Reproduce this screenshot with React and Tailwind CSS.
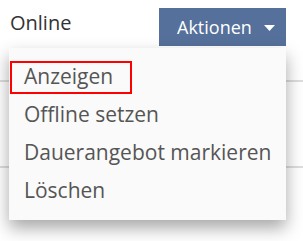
export default function App() {
  const items = ["Anzeigen", "Offline setzen", "Dauerangebot markieren", "Löschen"];

  return (
    <div
      className="relative w-[303px] h-[241px] bg-white overflow-hidden text-[#333]"
      style={{ fontFamily: '"Open Sans", sans-serif' }}
    >
      {/* Header row */}
      <div className="flex items-start justify-between pl-[10px] pr-[17px] pt-[8px] h-[48px]">
        <span className="text-[20px] leading-[24px] mt-[3px]">Online</span>
        <button className="flex items-center gap-[12px] h-[38px] w-[127px] pl-[18px] bg-[#55709a] text-white text-[18px]">
          Aktionen
          <svg width="11" height="6" viewBox="0 0 11 6" className="mt-[2px]">
            <polygon points="0,0 11,0 5.5,6" fill="#fff" />
          </svg>
        </button>
      </div>

      {/* Table rows behind */}
      <div className="h-[34px] border-b-2 border-[#dddddd]" />
      <div className="h-[86px] border-b-2 border-[#dddddd]" />

      {/* Dropdown menu */}
      <div className="absolute left-[9px] top-[48px] w-[277px] h-[172px] bg-[#fafafa] py-[10px] shadow-[0_8px_16px_rgba(0,0,0,0.35)]">
        {items.map((label, i) => (
          <div key={i} className="h-[38px] flex items-center text-[21px] text-[#555]">
            {i === 0 ? (
              <span className="ml-[1px] pl-[12px] pr-[17px] h-[33px] flex items-center border-2 border-[#ff0000]">
                {label}
              </span>
            ) : (
              <span className="pl-[15px]">{label}</span>
            )}
          </div>
        ))}
      </div>
    </div>
  );
}
